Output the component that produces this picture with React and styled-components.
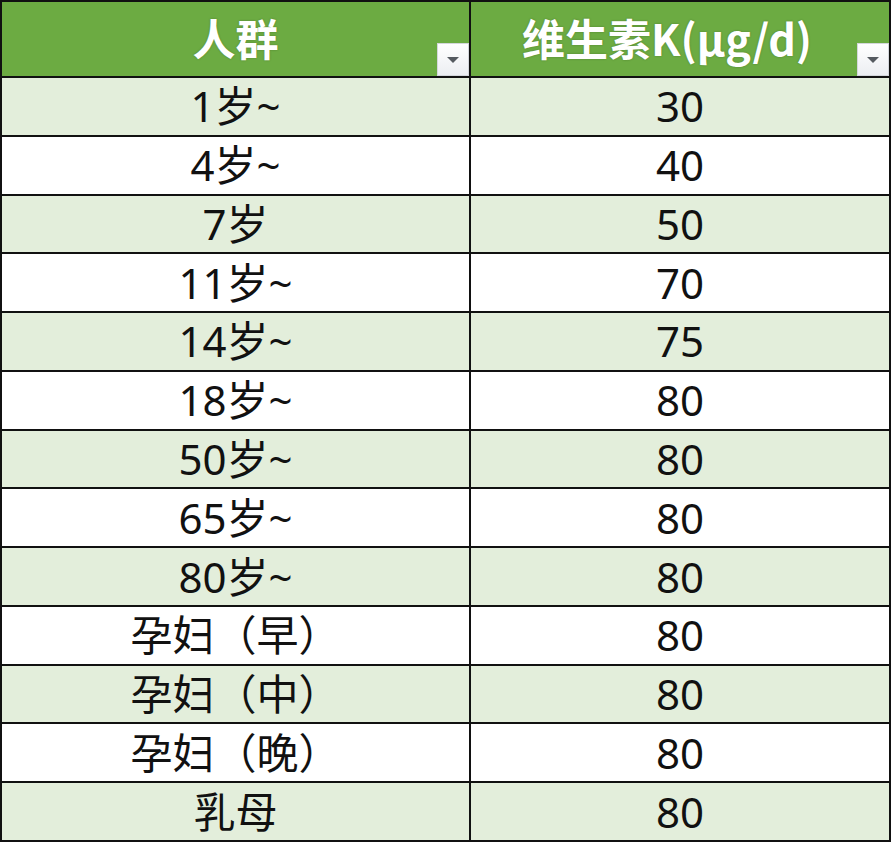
import React from "react";
import styled, { createGlobalStyle } from "styled-components";

const Global = createGlobalStyle`
  html, body { margin: 0; padding: 0; background: #ffffff; }
  body { font-family: "Noto Sans", "Noto Sans CJK SC", sans-serif; }
`;

const Table = styled.div`
  display: grid;
  grid-template-columns: 467px 418px;
  grid-template-rows: 74px repeat(13, 1fr);
  gap: 2px;
  padding: 2px;
  width: max-content;
  height: 842px;
  box-sizing: border-box;
  background: #111111;
`;

const HeadCell = styled.div`
  position: relative;
  display: flex;
  align-items: center;
  justify-content: center;
  padding-right: ${(p) => p.$shift || 0}px;
  padding-bottom: 4px;
  background: #6cab42;
  color: #ffffff;
  font-family: "Noto Sans CJK SC", "Noto Sans", sans-serif;
  font-weight: 700;
  font-size: 43px;
  line-height: 1;
  text-shadow: 0 0 2px rgba(40, 70, 20, 0.45);
`;

const FilterButton = styled.div`
  position: absolute;
  right: 0;
  bottom: 0;
  width: 32px;
  height: 33px;
  box-sizing: border-box;
  background: linear-gradient(#ffffff, #eceef2);
  border: 1px solid #d4d7dc;
  display: flex;
  align-items: center;
  justify-content: center;
`;

const Triangle = styled.span`
  width: 0;
  height: 0;
  border-left: 6px solid transparent;
  border-right: 6px solid transparent;
  border-top: 6px solid #555a60;
`;

const Cell = styled.div`
  display: flex;
  align-items: center;
  justify-content: center;
  background: ${(p) => (p.$tint ? "#e3eedb" : "#ffffff")};
  color: #111111;
  font-family: "Noto Sans", "Noto Sans CJK SC", sans-serif;
  font-size: 42px;
  line-height: 1;
`;

const rows = [
  ["1岁~", "30"],
  ["4岁~", "40"],
  ["7岁", "50"],
  ["11岁~", "70"],
  ["14岁~", "75"],
  ["18岁~", "80"],
  ["50岁~", "80"],
  ["65岁~", "80"],
  ["80岁~", "80"],
  ["孕妇（早）", "80"],
  ["孕妇（中）", "80"],
  ["孕妇（晚）", "80"],
  ["乳母", "80"],
];

export default function App() {
  return (
    <>
      <Global />
      <Table>
        <HeadCell>
          人群
          <FilterButton>
            <Triangle />
          </FilterButton>
        </HeadCell>
        <HeadCell $shift={26}>
          维生素K(μg/d)
          <FilterButton>
            <Triangle />
          </FilterButton>
        </HeadCell>
        {rows.map(([group, value], i) => (
          <React.Fragment key={i}>
            <Cell $tint={i % 2 === 0}>{group}</Cell>
            <Cell $tint={i % 2 === 0}>{value}</Cell>
          </React.Fragment>
        ))}
      </Table>
    </>
  );
}
